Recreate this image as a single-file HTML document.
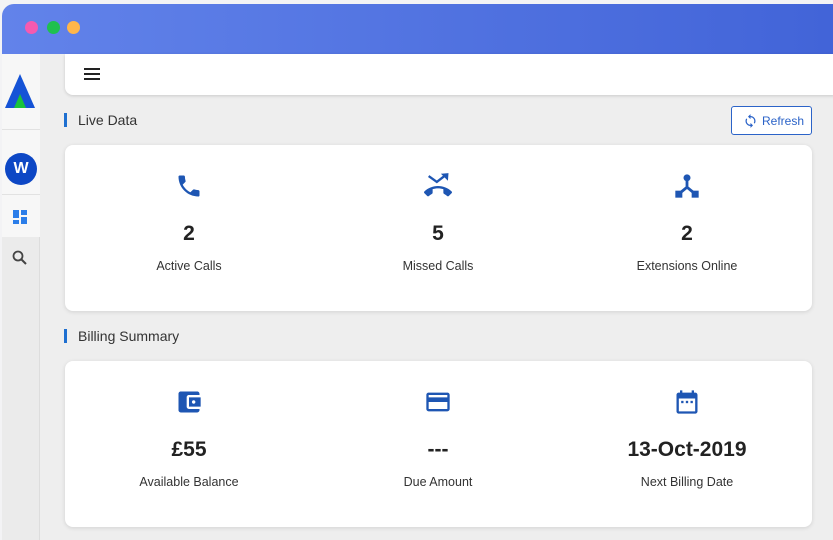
<!DOCTYPE html><html><head><style>
*{margin:0;padding:0;box-sizing:border-box}
body{width:833px;height:540px;overflow:hidden;background:#f3f3f5;font-family:"Liberation Sans",sans-serif;position:relative}
.win{position:absolute;left:2px;top:4px;width:831px;height:536px;background:#eeeeee;border-top-left-radius:12px;overflow:hidden}
.bar{position:absolute;left:0;top:0;width:100%;height:50px;background:linear-gradient(90deg,#6283ea,#4264d8)}
.dot{position:absolute;top:17px;width:13px;height:13px;border-radius:50%}
.side{position:absolute;left:0;top:50px;width:38px;height:486px;background:#ebebeb;border-right:1px solid #ddd}
.s1{position:absolute;left:0;top:0;width:38px;height:76px;background:#f7f7f7;border-bottom:1px solid #e2e2e2}
.s2{position:absolute;left:0;top:76px;width:38px;height:65px;background:#f7f7f7;border-bottom:1px solid #e2e2e2}
.s3{position:absolute;left:0;top:141px;width:38px;height:42px;background:#f7f7f7}
.hdr{position:absolute;left:63px;top:50px;width:770px;height:41px;background:#fff;border-bottom-left-radius:8px;box-shadow:0 1px 3px rgba(0,0,0,.15)}
.title{position:absolute;left:62px;font-size:14px;color:#333;border-left:3px solid #1e6fd0;padding-left:11px;line-height:14px}
.card{position:absolute;left:63px;width:747px;height:166px;background:#fff;border-radius:8px;box-shadow:0 1px 4px rgba(0,0,0,.12)}
.col{position:absolute;top:0;width:200px;text-align:center}
.col svg{position:absolute;left:86px;top:27px}
.num{position:absolute;top:77px;width:100%;font-size:21px;font-weight:bold;color:#222}
.lbl{position:absolute;top:114px;width:100%;font-size:12.5px;color:#333}
.btn{position:absolute;left:729px;top:102px;width:81px;height:29px;border:1px solid #2b63c8;border-radius:3px;background:#fff;color:#2b63c8;font-size:12px;line-height:29px;padding-left:30px}
</style></head><body>
<div class="win">
<div class="bar"></div>
<div class="dot" style="left:23px;background:#f55ab0"></div>
<div class="dot" style="left:45px;background:#1fc04f"></div>
<div class="dot" style="left:65px;background:#ffb64a"></div>
<div class="side">
<div class="s1"><svg width="38" height="76"><polygon points="18,20 3,54 33,54" fill="#1553d6"/><polygon points="18,40 12,54 24,54" fill="#19c23a"/></svg></div>
<div class="s2"><div style="position:absolute;left:3px;top:23px;width:32px;height:32px;border-radius:50%;background:#0d47c5;color:#fff;font-size:16px;font-weight:bold;line-height:32px;text-align:center">W</div></div>
<div class="s3"><svg style="position:absolute;left:11px;top:15px" width="15" height="15"><rect x="0" y="0" width="6" height="8" fill="#2b7de9"/><rect x="8" y="0" width="6" height="5" fill="#2b7de9"/><rect x="0" y="10" width="6" height="4" fill="#2b7de9"/><rect x="8" y="7" width="6" height="7" fill="#2b7de9"/></svg></div>
<svg style="position:absolute;left:10px;top:196px" width="16" height="16"><circle cx="6" cy="6" r="4.5" fill="none" stroke="#444" stroke-width="1.8"/><line x1="9.5" y1="9.5" x2="14" y2="14" stroke="#444" stroke-width="2"/></svg>
</div>
<div class="hdr"><svg style="position:absolute;left:19px;top:14px" width="16" height="12"><rect y="0" width="16" height="2" fill="#222"/><rect y="5" width="16" height="2" fill="#222"/><rect y="10" width="16" height="2" fill="#222"/></svg></div>
<div class="title" style="top:109px">Live Data</div>
<div class="btn"><svg style="position:absolute;left:11px;top:6px" width="15" height="16" viewBox="0 0 24 24"><path fill="#2b63c8" d="M12 4V1L8 5l4 4V6c3.31 0 6 2.69 6 6 0 1.01-.25 1.970-.7 2.8l1.46 1.46C19.54 15.03 20 13.57 20 12c0-4.420-3.58-8-8-8zm0 14c-3.31 0-6-2.69-6-6 0-1.01.25-1.97.7-2.8L5.24 7.74C4.46 8.97 4 10.43 4 12c0 4.42 3.58 8 8 8v3l4-4-4-4v3z"/></svg>Refresh</div>
<div class="card" style="top:141px">
<div class="col" style="left:24px"><svg width="28" height="28" viewBox="0 0 24 24"><path fill="#1e56b3" d="M6.62 10.79c1.44 2.83 3.76 5.14 6.59 6.59l2.2-2.2c.27-.27.67-.36 1.02-.24 1.12.37 2.33.57 3.57.57.55 0 1 .45 1 1V20c0 .55-.45 1-1 1-9.39 0-17-7.61-17-17 0-.55.45-1 1-1h3.5c.55 0 1 .45 1 1 0 1.25.2 2.45.57 3.57.11.35.03.74-.25 1.02l-2.2 2.2z"/></svg><div class="num">2</div><div class="lbl">Active Calls</div></div>
<div class="col" style="left:273px"><svg width="28" height="28" viewBox="0 0 24 24"><path fill="#1e56b3" d="M23.71 16.67C20.66 13.78 16.54 12 12 12 7.46 12 3.34 13.78.29 16.67c-.18.18-.29.43-.29.71 0 .28.11.53.29.71l2.48 2.48c.18.18.43.29.71.29.27 0 .52-.11.7-.28.79-.74 1.69-1.36 2.66-1.85.33-.16.56-.5.56-.9v-3.1c1.45-.48 3-.73 4.6-.73s3.15.25 4.6.72v3.1c0 .39.23.74.56.9.98.49 1.870 1.12 2.67 1.85.18.18.43.28.7.28.28 0 .53-.11.71-.29l2.48-2.48c.18-.18.29-.43.29-.71 0-.28-.12-.52-.3-.7z"/><path d="M4 3.5l7 5 6.5-5" stroke="#1e56b3" stroke-width="2" fill="none"/><polygon points="21,1 14.5,1.5 20.5,7.5" fill="#1e56b3"/></svg><div class="num">5</div><div class="lbl">Missed Calls</div></div>
<div class="col" style="left:522px"><svg width="28" height="28" viewBox="0 0 24 24"><circle cx="12" cy="5" r="3" fill="#1e56b3"/><path d="M12 7v6l-6 5M12 13l6 5" stroke="#1e56b3" stroke-width="2.4" fill="none"/><rect x="2" y="16" width="6" height="6" fill="#1e56b3"/><rect x="16" y="16" width="6" height="6" fill="#1e56b3"/></svg><div class="num">2</div><div class="lbl">Extensions Online</div></div>
</div>
<div class="title" style="top:325px">Billing Summary</div>
<div class="card" style="top:357px">
<div class="col" style="left:24px"><svg width="28" height="28" viewBox="0 0 24 24"><path fill="#1e56b3" d="M21 18v1c0 1.1-.9 2-2 2H5c-1.11 0-2-.9-2-2V5c0-1.1.89-2 2-2h14c1.1 0 2 .9 2 2v1h-9c-1.11 0-2 .9-2 2v8c0 1.1.89 2 2 2h9zm-9-2h10V8H12v8zm4-2.5c-.83 0-1.5-.67-1.5-1.5s.67-1.5 1.5-1.5 1.5.67 1.5 1.5-.67 1.5-1.5 1.5z"/></svg><div class="num">£55</div><div class="lbl">Available Balance</div></div>
<div class="col" style="left:273px"><svg width="28" height="28" viewBox="0 0 24 24"><path fill="#1e56b3" d="M20 4H4c-1.11 0-1.99.89-1.99 2L2 18c0 1.11.89 2 2 2h16c1.11 0 2-.89 2-2V6c0-1.11-.89-2-2-2zm0 14H4v-6h16v6zm0-10H4V6h16v2z"/></svg><div class="num">---</div><div class="lbl">Due Amount</div></div>
<div class="col" style="left:522px"><svg width="28" height="28" viewBox="0 0 24 24"><path fill="#1e56b3" d="M19 4h-1V2h-2v2H8V2H6v2H5c-1.11 0-2 .9-2 2v14c0 1.1.89 2 2 2h14c1.1 0 2-.9 2-2V6c0-1.1-.9-2-2-2zm0 16H5V9h14v11z"/><rect x="7" y="11" width="2" height="2" fill="#1e56b3"/><rect x="11" y="11" width="2" height="2" fill="#1e56b3"/><rect x="15" y="11" width="2" height="2" fill="#1e56b3"/></svg><div class="num">13-Oct-2019</div><div class="lbl">Next Billing Date</div></div>
</div>
</div>
</body></html>
